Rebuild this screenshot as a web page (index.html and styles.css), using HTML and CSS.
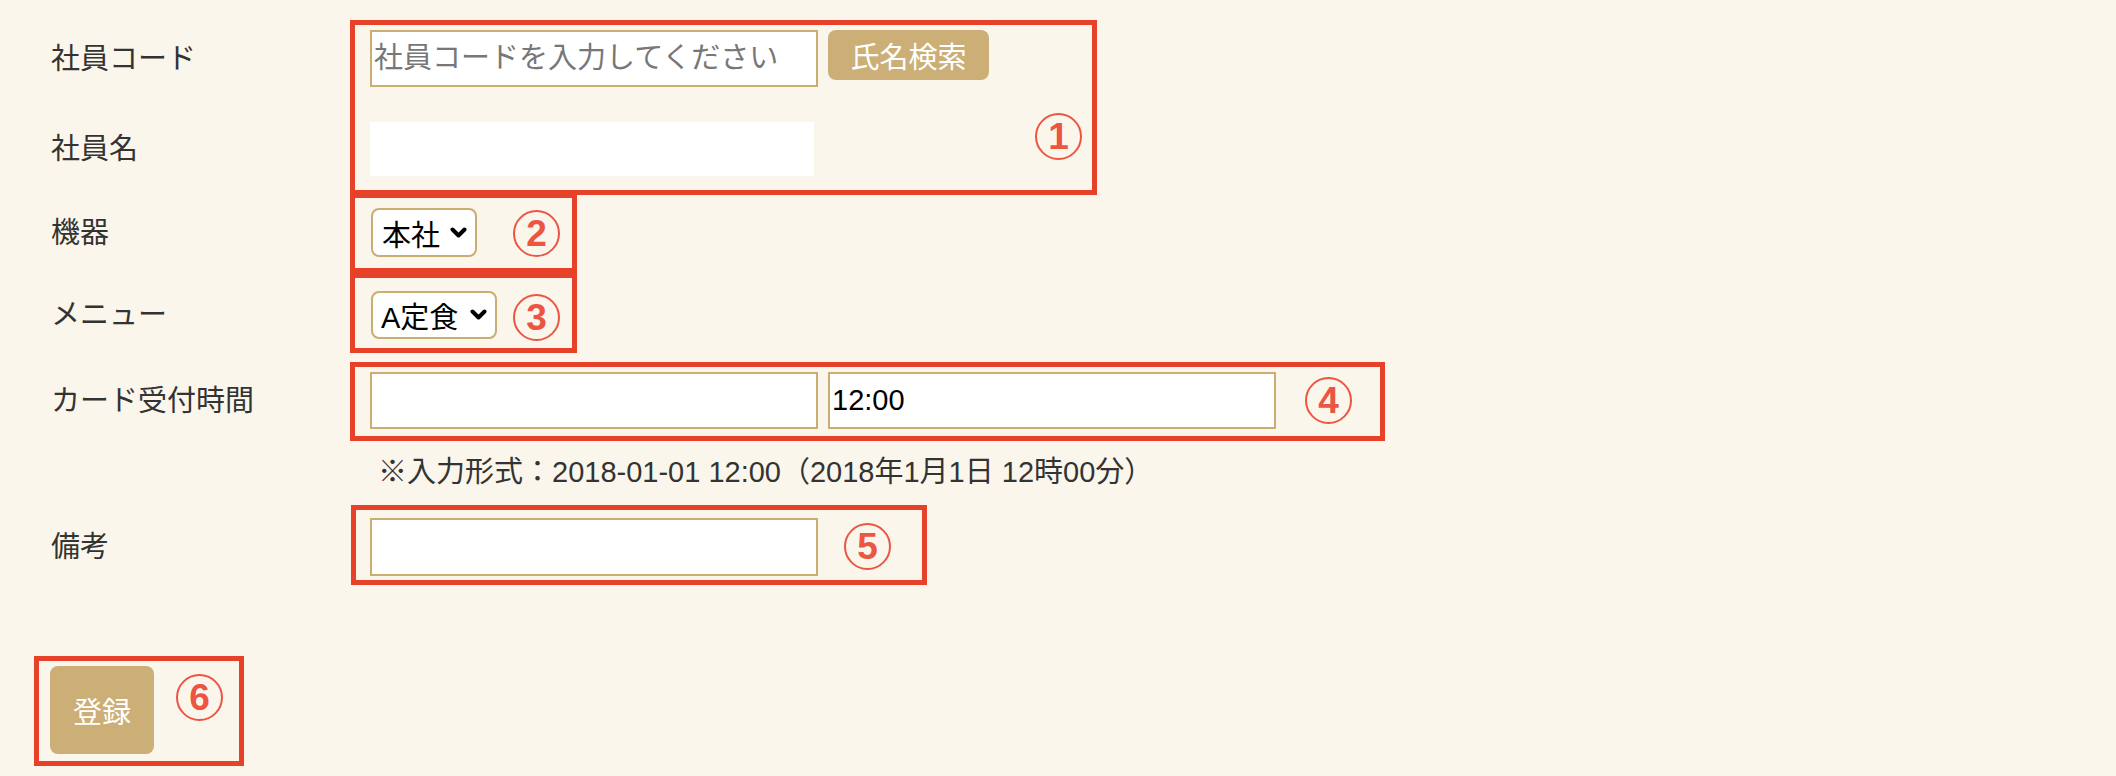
FILE: index.html
```html
<!DOCTYPE html>
<html lang="ja">
<head>
<meta charset="utf-8">
<title>登録フォーム</title>
<link rel="stylesheet" href="styles.css">
</head>
<body>
<div class="page">
  <form class="form">
    <div class="row row-code">
      <div class="label">社員コード</div>
      <div class="value">
        <input class="field" type="text" placeholder="社員コードを入力してください">
        <button type="button" class="btn btn-search">氏名検索</button>
      </div>
    </div>
    <div class="row row-name">
      <div class="label">社員名</div>
      <div class="value">
        <div class="readonly"></div>
      </div>
    </div>
    <div class="row row-device">
      <div class="label">機器</div>
      <div class="value">
        <div class="select select-office">
          <span>本社</span>
          <svg class="chev" width="17" height="12" viewBox="0 0 17 12"><path d="M2.5 2.5 L8.5 8.5 L14.5 2.5" fill="none" stroke="#000" stroke-width="4" stroke-linecap="round" stroke-linejoin="round"/></svg>
        </div>
      </div>
    </div>
    <div class="row row-menu">
      <div class="label">メニュー</div>
      <div class="value">
        <div class="select select-menu">
          <span>A定食</span>
          <svg class="chev" width="17" height="12" viewBox="0 0 17 12"><path d="M2.5 2.5 L8.5 8.5 L14.5 2.5" fill="none" stroke="#000" stroke-width="4" stroke-linecap="round" stroke-linejoin="round"/></svg>
        </div>
      </div>
    </div>
    <div class="row row-time">
      <div class="label">カード受付時間</div>
      <div class="value">
        <input class="field" type="text">
        <input class="field field-gap" type="text" value="12:00">
      </div>
    </div>
    <div class="row row-hint">
      <div class="label"></div>
      <div class="value hint">※入力形式：2018-01-01 12:00（2018年1月1日 12時00分）</div>
    </div>
    <div class="row row-note">
      <div class="label">備考</div>
      <div class="value">
        <input class="field field-tall" type="text">
      </div>
    </div>
    <div class="submit-row">
      <button type="button" class="btn btn-submit">登録</button>
    </div>
  </form>

  <div class="annotations">
    <div class="mark mark-1"><span class="num">1</span></div>
    <div class="mark mark-2"><span class="num">2</span></div>
    <div class="mark mark-3"><span class="num">3</span></div>
    <div class="mark mark-4"><span class="num">4</span></div>
    <div class="mark mark-5"><span class="num">5</span></div>
    <div class="mark mark-6"><span class="num">6</span></div>
  </div>
</div>
</body>
</html>
```
FILE: styles.css
```css
html, body {
  margin: 0;
  padding: 0;
  background: #faf6ec;
}

body {
  font-family: "Liberation Sans", "Noto Sans CJK JP", sans-serif;
  font-size: 29px;
  color: #333;
}

.page {
  position: relative;
  width: 2116px;
  height: 776px;
  overflow: hidden;
}

.form {
  display: flex;
  flex-direction: column;
  padding-left: 51px;
}

.row {
  display: flex;
  align-items: center;
}

.label {
  width: 319px;
  flex: none;
  line-height: 40px;
  color: #333;
}

.value {
  display: flex;
  align-items: center;
}

.row-code { margin-top: 30px; height: 57px; }
.row-code .value { align-items: flex-start; height: 57px; }
.row-name { margin-top: 35px; height: 54px; }
.row-device { margin-top: 32px; height: 49px; }
.row-menu { margin-top: 34px; height: 48px; }
.row-time { margin-top: 33px; height: 57px; }
.row-hint { margin-top: 23px; height: 40px; }
.row-note { margin-top: 26px; height: 58px; }

.field {
  box-sizing: border-box;
  width: 448px;
  height: 57px;
  border: 2px solid #c9ad71;
  background: #fff;
  padding: 0 2px;
  margin: 0;
  font-family: "Liberation Sans", "Noto Sans CJK JP", sans-serif;
  font-size: 29px;
  color: #000;
  outline: none;
}

.field::placeholder {
  color: #777;
}

.field-gap { margin-left: 10px; }
.field-tall { height: 58px; }

.readonly {
  width: 444px;
  height: 54px;
  background: #fff;
}

.btn {
  border: none;
  background: #cbaf76;
  color: #fff;
  font-family: "Liberation Sans", "Noto Sans CJK JP", sans-serif;
  font-size: 29px;
  border-radius: 8px;
  padding: 0;
  margin: 0;
}

.btn-search {
  width: 161px;
  height: 50px;
  margin-left: 10px;
}

.select {
  box-sizing: border-box;
  display: flex;
  align-items: center;
  justify-content: space-between;
  padding: 0 8px 0 9px;
  border: 2px solid #c9ad71;
  border-radius: 8px;
  background: #fff;
  color: #000;
  font-size: 29px;
  margin-left: 1px;
}

.select-office { width: 106px; height: 49px; }
.select-menu { width: 126px; height: 48px; padding-left: 8px; }

.chev { flex: none; }

.hint {
  padding-left: 8px;
  line-height: 40px;
  color: #333;
  white-space: nowrap;
}

.submit-row {
  display: flex;
  margin-top: 90px;
  margin-left: -1px;
}

.btn-submit {
  width: 104px;
  height: 88px;
}

/* annotation overlay */
.annotations {
  position: absolute;
  inset: 0;
  pointer-events: none;
}

.mark {
  position: absolute;
  box-sizing: border-box;
  border: 5px solid #e8412a;
  display: flex;
  justify-content: flex-end;
  align-items: flex-start;
}

.num {
  box-sizing: border-box;
  width: 47px;
  height: 47px;
  border: 2px solid #ec5542;
  border-radius: 50%;
  color: #ec5542;
  font-family: "Liberation Sans", sans-serif;
  font-weight: bold;
  font-size: 37px;
  line-height: 43px;
  text-align: center;
}

.mark-1 { left: 350px; top: 20px; width: 747px; height: 175px; padding: 88px 10px 0 0; }
.mark-2 { left: 350px; top: 193px; width: 227px; height: 80px; padding: 12px 12px 0 0; }
.mark-3 { left: 350px; top: 273px; width: 227px; height: 80px; padding: 16px 12px 0 0; }
.mark-4 { left: 350px; top: 362px; width: 1035px; height: 79px; padding: 10px 28px 0 0; }
.mark-5 { left: 351px; top: 505px; width: 576px; height: 80px; padding: 13px 31px 0 0; }
.mark-6 { left: 34px; top: 656px; width: 210px; height: 110px; padding: 13px 16px 0 0; }
```
